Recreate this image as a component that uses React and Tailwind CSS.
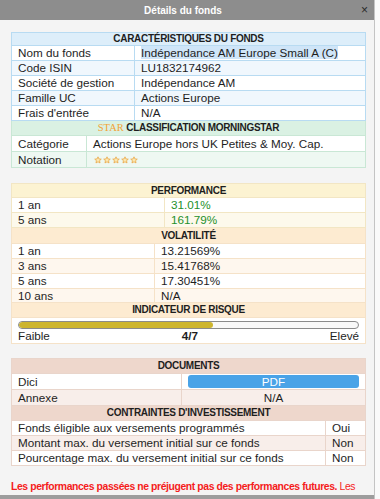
import React from 'react';

const font = { fontFamily: '"Liberation Sans", Arial, sans-serif' };

// Ligne de tableau : libellé + valeur (hauteur = interligne + bordure basse)
const Row = ({ label, value, bg, border, valueClass = '', lead = 'leading-[14px]' }) => (
    <tr className={bg}>
        <td className={`border-r border-b ${border} p-0 pl-[6px] ${lead}`}>{label}</td>
        <td className={`border-r border-b ${border} p-0 pl-[6px] ${lead} ${valueClass}`}>{value}</td>
    </tr>
);

const Header = ({ children, bg, border, lead = 'leading-[14px]' }) => (
    <tr className={bg}>
        <th colSpan={2} className={`border-r border-b ${border} p-0 font-bold text-center text-[10px] tracking-[-0.3px] ${lead}`}>
            {children}
        </th>
    </tr>
);

const Table = ({ border, first, top = false, className = '', children }) => (
    <table className={`w-[355px] border-separate border-spacing-0 table-fixed border-l ${top ? 'border-t' : ''} ${border} ${className}`}>
        <colgroup>
            <col style={{ width: first }} />
            <col />
        </colgroup>
        <tbody>{children}</tbody>
    </table>
);

const Star = () => (
    <svg className="w-[8px] h-[8px]" viewBox="0 0 24 24">
        <path
            d="M12 2.5l2.9 6.3 6.9.7-5.2 4.6 1.5 6.8L12 17.4l-6.1 3.5 1.5-6.8-5.2-4.6 6.9-.7z"
            fill="#fbe7b0"
            stroke="#e9a23b"
            strokeWidth={2.2}
            strokeLinejoin="round"
        />
    </svg>
);

const App = () => {
    const blue = 'border-[#b8dbf2]';
    const green = 'border-[#c9e7d5]';
    const yellow = 'border-[#f2e6c4]';
    const peach = 'border-[#f5e2c8]';
    const rose = 'border-[#e9d5cb]';

    return (
        <div className="w-[380px] h-[499px] overflow-hidden flex bg-[#fafafa] text-[11.7px] text-[#1e1e1e]" style={font}>
            {/* Fenêtre modale */}
            <div className="w-[375px] shrink-0 h-[499px] flex flex-col bg-[#f4f4f4] border-r border-[#c4c4c4]">
                <div className="h-[20px] shrink-0 bg-[#8d8d8d] relative flex items-center justify-center">
                    <span className="text-white font-bold text-[10px] mr-[8px]">Détails du fonds</span>
                    <span className="absolute right-[6px] top-[3px] text-[#2a2a2a] text-[12px] leading-[14px]">×</span>
                </div>

                <div className="flex-1 overflow-hidden pl-[11px] pt-[12px]">
                    {/* Caractéristiques */}
                    <Table border={blue} first="123px" top>
                        <Header bg="bg-[#ddeefa]" border={blue} lead="leading-[12px]">CARACTÉRISTIQUES DU FONDS</Header>
                        <Row
                            label="Nom du fonds"
                            value={<span className="bg-[#cfe5f8]">Indépendance AM Europe Small A (C)</span>}
                            bg="bg-white"
                            border={blue}
                        />
                        <Row label="Code ISIN" value="LU1832174962" bg="bg-[#f0f7fd]" border={blue} />
                        <Row label="Société de gestion" value="Indépendance AM" bg="bg-white" border={blue} />
                        <Row label="Famille UC" value="Actions Europe" bg="bg-[#f0f7fd]" border={blue} />
                        <Row label="Frais d'entrée" value="N/A" bg="bg-white" border={blue} />
                    </Table>

                    {/* Morningstar */}
                    <Table border={green} first="75px">
                        <Header bg="bg-[#daf1e3]" border={green}>
                            <span className="text-[#f2a33a] font-normal text-[10.5px] tracking-normal" style={{ fontFamily: '"Liberation Serif", serif' }}>STAR</span> CLASSIFICATION MORNINGSTAR
                        </Header>
                        <Row label="Catégorie" value="Actions Europe hors UK Petites & Moy. Cap." bg="bg-white" border={green} lead="leading-[15px]" />
                        <Row
                            label="Notation"
                            value={
                                <div className="flex items-center h-[15px] gap-[1px] pl-[1px]">
                                    <Star /><Star /><Star /><Star /><Star />
                                </div>
                            }
                            bg="bg-[#eef8f2]"
                            border={green}
                            lead="leading-[15px]"
                        />
                    </Table>

                    {/* Performance */}
                    <Table border={yellow} first="153px" top className="mt-[15px]">
                        <Header bg="bg-[#fcf3d2]" border={yellow} lead="leading-[13px]">PERFORMANCE</Header>
                        <Row label="1 an" value="31.01%" bg="bg-white" border={yellow} valueClass="text-[#23902a]" />
                        <Row label="5 ans" value="161.79%" bg="bg-[#fdf9ec]" border={yellow} valueClass="text-[#23902a]" />
                    </Table>

                    {/* Volatilité + indicateur de risque */}
                    <Table border={peach} first="143px">
                        <Header bg="bg-[#fdebd1]" border={peach} lead="leading-[15px]">VOLATILITÉ</Header>
                        <Row label="1 an" value="13.21569%" bg="bg-white" border={peach} />
                        <Row label="3 ans" value="15.41768%" bg="bg-[#fef7ee]" border={peach} />
                        <Row label="5 ans" value="17.30451%" bg="bg-white" border={peach} />
                        <Row label="10 ans" value="N/A" bg="bg-[#fef7ee]" border={peach} lead="leading-[13px]" />
                        <Header bg="bg-[#fdebd1]" border={peach}>INDICATEUR DE RISQUE</Header>
                        <tr className="bg-white">
                            <td colSpan={2} className={`border-r border-b ${peach} p-0 px-[6px] pt-[3px] pb-[1px]`}>
                                <div className="h-[8px] rounded-full border border-[#8a8a8a] bg-[#f8f8f8] overflow-hidden">
                                    <div className="h-full bg-[#cdb52e] rounded-full" style={{ width: `${(4 / 7) * 100}%` }} />
                                </div>
                                <div className="flex justify-between leading-[13px]">
                                    <span>Faible</span>
                                    <span className="font-bold">4/7</span>
                                    <span>Elevé</span>
                                </div>
                            </td>
                        </tr>
                    </Table>

                    {/* Documents */}
                    <Table border={rose} first="170px" top className="mt-[14px]">
                        <Header bg="bg-[#eed7cc]" border={rose}>DOCUMENTS</Header>
                        <tr className="bg-white">
                            <td className={`border-r border-b ${rose} p-0 pl-[6px] leading-[15px]`}>Dici</td>
                            <td className={`border-r border-b ${rose} p-0 px-[6px] py-[1px]`}>
                                <div className="bg-[#4aa3e7] text-white text-center rounded-[3px] leading-[13px]">PDF</div>
                            </td>
                        </tr>
                        <tr className="bg-[#f8eeea]">
                            <td className={`border-r border-b ${rose} p-0 pl-[6px] leading-[15px]`}>Annexe</td>
                            <td className={`border-r border-b ${rose} p-0 text-center leading-[15px]`}>N/A</td>
                        </tr>
                    </Table>

                    {/* Contraintes */}
                    <Table border={rose} first="314px">
                        <Header bg="bg-[#eed7cc]" border={rose}>CONTRAINTES D'INVESTISSEMENT</Header>
                        <Row label="Fonds éligible aux versements programmés" value="Oui" bg="bg-white" border={rose} />
                        <Row label="Montant max. du versement initial sur ce fonds" value="Non" bg="bg-[#f8eeea]" border={rose} />
                        <Row label="Pourcentage max. du versement initial sur ce fonds" value="Non" bg="bg-white" border={rose} />
                    </Table>

                    <p className="mt-[13px] w-[360px] text-[10.4px] tracking-[-0.4px] text-[#f51c1c] leading-[15px]">
                        <span className="font-bold">Les performances passées ne préjugent pas des performances futures.</span>{' '}
                        Les performances présentées sont brutes et ne tiennent pas compte des frais de gestion du contrat.
                    </p>
                </div>
                <div className="h-[4px] shrink-0 bg-[#9d9d9d]" />
            </div>
            <div className="flex-1" />
        </div>
    );
};

export default App;
